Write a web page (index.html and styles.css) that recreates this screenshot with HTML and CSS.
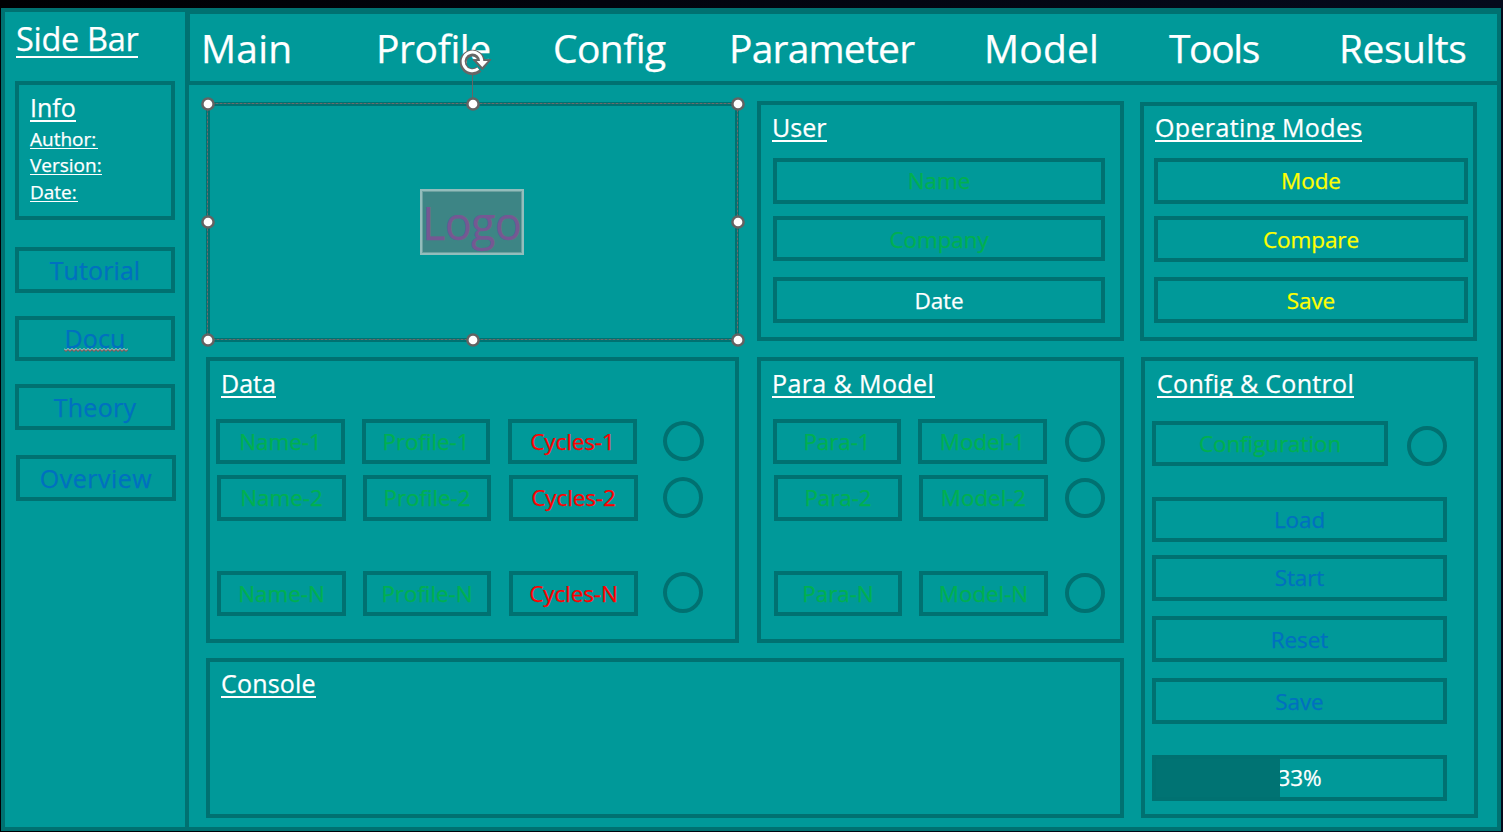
FILE: index.html
```html
<!DOCTYPE html>
<html lang="en">
<head>
<meta charset="utf-8">
<title>Dashboard</title>
<link rel="stylesheet" href="styles.css">
</head>
<body>
<div class="slide">
  <aside class="sidebar">
    <h1 class="side-title">Side Bar</h1>
    <section class="info">
      <h2 class="title info-title">Info</h2>
      <p class="meta author">Author:</p>
      <p class="meta version">Version:</p>
      <p class="meta date">Date:</p>
    </section>
    <div class="side-links">
      <div class="box link tutorial">Tutorial</div>
      <div class="box link docu"><span class="spell">Docu<svg class="squiggle" width="64" height="4" viewBox="0 0 64 4"><path class="sq-light" d="M0 .5l2 2 2-2 2 2 2-2 2 2 2-2 2 2 2-2 2 2 2-2 2 2 2-2 2 2 2-2 2 2 2-2 2 2 2-2 2 2 2-2 2 2 2-2 2 2 2-2 2 2 2-2 2 2 2-2 2 2 2-2 2 2 2-2"/><path class="sq-red" d="M0 1.500l2 2 2-2 2 2 2-2 2 2 2-2 2 2 2-2 2 2 2-2 2 2 2-2 2 2 2-2 2 2 2-2 2 2 2-2 2 2 2-2 2 2 2-2 2 2 2-2 2 2 2-2 2 2 2-2 2 2 2-2 2 2 2-2"/></svg></span></div>
      <div class="box link theory">Theory</div>
      <div class="box link overview">Overview</div>
    </div>
  </aside>
  <main class="main">
    <nav class="nav">
      <span class="n-main">Main</span><span class="n-profile">Profile</span><span class="n-config">Config</span><span class="n-param">Parameter</span><span class="n-model">Model</span><span class="n-tools">Tools</span><span class="n-results">Results</span>
    </nav>
    <div class="content">
      <div class="left">
        <div class="row-top">
          <section class="panel logo-panel">
            <span class="logo">Logo</span>
            <svg class="selection" width="560" height="310" viewBox="195 40 560 310">
              <path class="sel-line" d="M207.500 103.500H737.500V339.500H207.500Z"/>
              <path class="stem" d="M472.500 72V98"/>
              <g class="knob">
                <circle cx="208" cy="104" r="5.600"/><circle cx="473" cy="104" r="5.600"/><circle cx="738" cy="104" r="5.600"/>
                <circle cx="208" cy="222" r="5.600"/><circle cx="738" cy="222" r="5.600"/>
                <circle cx="208" cy="340" r="5.600"/><circle cx="473" cy="340" r="5.600"/><circle cx="738" cy="340" r="5.600"/>
              </g>
              <path class="rot-dark" d="M479 69A9.300 9.300 0 1 1 481.500 60.500"/>
              <path class="rot-head-dark" d="M472.800 59.600H491L482.300 69.800Z"/>
              <path class="rot-light" d="M478.300 68.600A9.300 9.300 0 1 1 481.700 62"/>
              <path class="rot-head" d="M476.600 61H487.800L482.300 67Z"/>
            </svg>
          </section>
          <section class="panel user">
            <h2 class="title t-user">User</h2>
            <div class="box f1 green">Name</div>
            <div class="box f2 green">Company</div>
            <div class="box f3 white">Date</div>
          </section>
        </div>
        <div class="row-mid">
          <section class="panel data">
            <h2 class="title t-data">Data</h2>
            <div class="cells c1"><div class="box green">Name-1</div><div class="box narrow green">Profile-1</div><div class="box red">Cycles-1</div><i class="ring wide"></i></div>
            <div class="cells c2"><div class="box green">Name-2</div><div class="box narrow green">Profile-2</div><div class="box red">Cycles-2</div><i class="ring tall"></i></div>
            <div class="cells c3"><div class="box green">Name-N</div><div class="box narrow green">Profile-N</div><div class="box red">Cycles-N</div><i class="ring tall"></i></div>
          </section>
          <section class="panel para">
            <h2 class="title t-para">Para &amp; Model</h2>
            <div class="cells c1"><div class="box narrow green">Para-1</div><div class="box green">Model-1</div><i class="ring tall"></i></div>
            <div class="cells c2"><div class="box narrow green">Para-2</div><div class="box green">Model-2</div><i class="ring low"></i></div>
            <div class="cells c3"><div class="box narrow green">Para-N</div><div class="box green">Model-N</div><i class="ring low"></i></div>
          </section>
        </div>
        <section class="panel console"><h2 class="title t-console">Console</h2></section>
      </div>
      <div class="right">
        <section class="panel modes">
          <h2 class="title t-modes">Operating Modes</h2>
          <div class="box f1 yellow">Mode</div>
          <div class="box f2 yellow">Compare</div>
          <div class="box f3 yellow">Save</div>
        </section>
        <section class="panel control">
          <h2 class="title t-control">Config &amp; Control</h2>
          <div class="config-row"><div class="box green">Configuration</div><i class="ring"></i></div>
          <div class="box blue b-load">Load</div>
          <div class="box blue b-start">Start</div>
          <div class="box blue b-reset">Reset</div>
          <div class="box blue b-save">Save</div>
          <div class="box white progress"><span>33%</span><div class="fill"></div></div>
        </section>
      </div>
    </div>
  </main>
</div>
</body>
</html>
```
FILE: styles.css
```css
* { box-sizing: border-box; }
body {
  margin: 0;
  width: 1503px;
  height: 832px;
  overflow: hidden;
  padding: 8px 2px 1px 1px;
  background: linear-gradient(90deg, #000003, #050a1c);
  font-family: "Open Sans", "Noto Sans", sans-serif;
  font-variant-ligatures: none;
  -webkit-text-stroke: 0.25px currentColor;
  color: #fff;
}
h1, h2, p { margin: 0; font-weight: 400; }
.slide {
  display: flex;
  width: 1500px;
  height: 823px;
  border: 4px solid #007171;
  background: #009999;
}

.sidebar { width: 184px; border-right: 4px solid #007171; padding: 4px 0 0 10px; }
.side-title {
  width: 122px;
  height: 42px;
  margin-left: 1px;
  line-height: 46px;
  font-size: 32.5px;
  border-bottom: 2px solid #fff;
  white-space: nowrap;
  letter-spacing: -0.3px;
}
.title {
  width: fit-content;
  height: 32px;
  line-height: 34px;
  font-size: 25px;
  border-bottom: 2px solid #fff;
  white-space: nowrap;
}
.info { width: 160px; height: 139px; margin-top: 23px; border: 4px solid #007171; padding: 5px 0 0 11px; }
.info-title { width: 46px; }
.meta {
  height: 22px;
  line-height: 24px;
  font-size: 19px;
  border-bottom: 1px solid #fff;
  white-space: nowrap;
}
.author { width: 68px; margin-top: 5px; }
.version { width: 72px; margin-top: 4px; }
.date { width: 48px; margin-top: 5px; }

.box {
  display: flex;
  align-items: center;
  justify-content: center;
  height: 46px;
  border: 4px solid #007171;
  font-size: 22.5px;
  line-height: 30px;
  letter-spacing: -0.1px;
  white-space: nowrap;
}
.green { color: #00b050; }
.red { color: #ff0000; }
.blue, .link { color: #0070c0; }
.yellow { color: #ffff00; }
.white { color: #fff; }

.link { width: 160px; font-size: 25px; letter-spacing: 0.1px; padding-bottom: 1px; }
.tutorial { margin-top: 27px; }
.docu { height: 45px; margin-top: 23px; }
.theory { margin-top: 23px; letter-spacing: 0.3px; }
.overview { margin: 25px 0 0 1px; letter-spacing: 0.5px; }
.spell { position: relative; }
.squiggle { position: absolute; left: -1px; bottom: 1px; fill: none; }
.sq-light { stroke: #d8e4e4; stroke-width: 1; }
.sq-red { stroke: #c0393a; stroke-width: 1; }

.main { flex: 1; }
.nav {
  display: grid;
  grid-template-columns: 175px 177px 176px 255px 185px 170px auto;
  height: 73px;
  border-top: 2px solid #007171;
  border-bottom: 4px solid #007171;
  border-left: 1px solid #007171;
  padding-left: 11px;
  font-size: 39px;
  line-height: 68px;
  white-space: nowrap;
}
.n-main, .n-model { letter-spacing: 0.2px; }
.n-profile { letter-spacing: -0.4px; }
.n-config { letter-spacing: -0.6px; }
.n-param { letter-spacing: -0.8px; }
.n-tools { letter-spacing: -1.4px; }
.n-results { letter-spacing: -0.5px; }

.content { display: flex; padding: 16px 0 0 17px; }
.left { width: 918px; }
.right { width: 338px; margin-left: 16px; padding-top: 1px; }
.row-top, .row-mid { display: flex; justify-content: space-between; }
.panel { border: 4px solid #007171; }

.logo-panel {
  position: relative;
  display: flex;
  justify-content: center;
  width: 533px;
  height: 240px;
  margin-top: 1px;
  padding: 83px 2px 0 0;
}
.logo {
  width: 104px;
  height: 66px;
  border: 2px solid #93bdbc;
  box-shadow: inset 0 0 0 1px #6ba09f;
  background: #3d8585;
  color: #755893;
  font-size: 45px;
  line-height: 63px;
  letter-spacing: -0.8px;
  text-align: center;
}
.selection { position: absolute; left: -15px; top: -66px; overflow: visible; z-index: 2; fill: none; }
.sel-line { stroke: #6b6b6b; stroke-width: 1; stroke-dasharray: 3 1; }
.stem { stroke: #666; stroke-width: 1; }
.knob { fill: #fff; stroke: #636363; stroke-width: 2.5; }
.rot-dark { stroke: #666; stroke-width: 6.8; }
.rot-head-dark { fill: #666; stroke: #666; stroke-width: 1; }
.rot-light { stroke: #fff; stroke-width: 3; }
.rot-head { fill: #fff; }

.user { width: 367px; height: 240px; padding: 5px 15px 0 12px; }
.user .title { margin-left: -1px; }
.f1 { margin-top: 16px; }
.f2 { margin-top: 12px; padding-top: 2px; }
.f3 { margin-top: 16px; padding-top: 2px; }
.user .f2 { height: 45px; }

.row-mid { margin-top: 15px; }
.data { width: 533px; height: 286px; padding: 5px 0 0 6px; }
.data .title { margin-left: 5px; }
.para { width: 367px; height: 286px; padding: 5px 0 0 12px; }
.para .title { margin-left: -1px; }
.cells { display: flex; }
.cells .box { width: 129px; height: 45px; margin-right: 17px; }
.cells .narrow { width: 128px; margin-right: 18px; }
.c1 { margin-top: 21px; }
.c2 { margin: 11px 0 0 1px; }
.cells.c2 .box { height: 46px; }
.c3 { margin: 50px 0 0 1px; }
.para .narrow { margin-right: 17px; }
.ring { width: 40px; height: 40px; border: 4px solid #007171; border-radius: 50%; }
.data .ring { margin: 2px 0 0 9px; }
.data .c2 .ring, .data .c3 .ring { margin-left: 8px; }
.data .c3 .ring { margin-top: 1px; }
.para .ring { margin: 2px 0 0 1px; }
.para .c2 .ring, .para .c3 .ring { margin-left: 0; }
.para .c2 .ring { margin-top: 3px; }
.wide { width: 41px; }
.tall { height: 41px; }

.console { height: 160px; margin-top: 15px; padding: 4px 0 0 11px; }

.modes { width: 337px; height: 239px; padding: 4px 5px 0 10px; }
.modes .title { margin-left: 1px; }
.modes .f3 { margin-top: 15px; padding-top: 1px; }
.control { width: 337px; height: 461px; margin: 16px 0 0 1px; padding: 5px 27px 0 7px; }
.control .title { margin-left: 5px; }
.config-row { display: flex; align-items: flex-end; justify-content: space-between; margin-top: 23px; }
.config-row .box { width: 236px; height: 45px; }
.b-load { height: 45px; margin-top: 31px; }
.b-start { margin-top: 13px; }
.b-reset { margin-top: 15px; padding-top: 2px; }
.b-save { margin-top: 16px; padding-top: 2px; }
.progress { position: relative; margin-top: 31px; }
.fill { position: absolute; left: 0; top: 0; width: 124px; height: 38px; background: #007373; }

.t-user { width: 55px; }
.t-data { width: 55px; }
.t-para { width: 163px; letter-spacing: 0.4px; }
.t-console { width: 95px; letter-spacing: 0.2px; }
.t-modes { width: 207px; letter-spacing: 0.35px; overflow: hidden; }
.t-control { width: 197px; letter-spacing: 0.3px; overflow: hidden; }
```
